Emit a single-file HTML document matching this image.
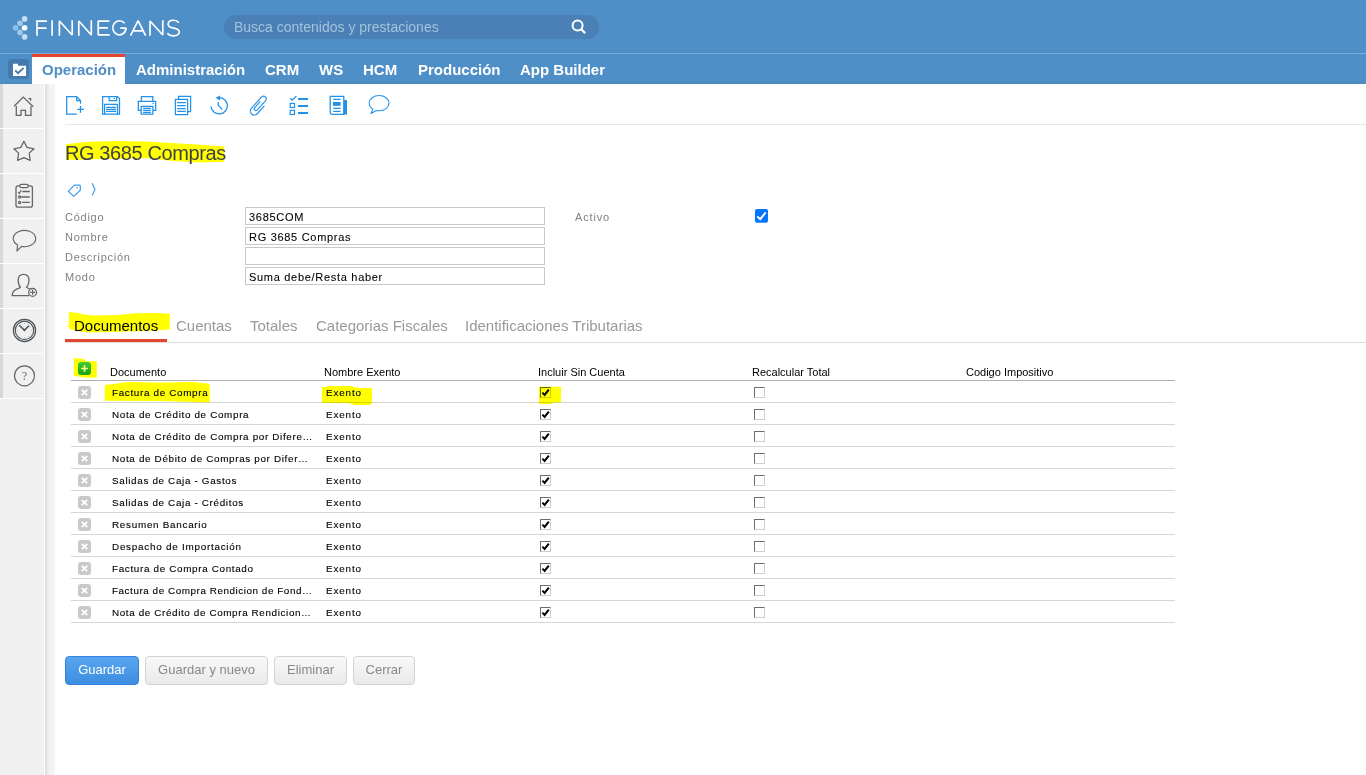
<!DOCTYPE html>
<html><head><meta charset="utf-8">
<style>
*{box-sizing:border-box;margin:0;padding:0}
html,body{width:1366px;height:775px;overflow:hidden;background:#fff;font-family:"Liberation Sans",sans-serif;position:relative}
.abs{position:absolute}
#top{left:0;top:0;width:1366px;height:53px;background:#4f8fc8}
#topline{left:0;top:53px;width:1366px;height:1px;background:#7aabd8}
#nav{left:0;top:54px;width:1366px;height:30px;background:#4f8fc8}
#navbot{left:0;top:83px;width:1366px;height:1px;background:#4a88c2}
.navi{position:absolute;top:60px;font-weight:bold;font-size:15px;color:#fff;line-height:20px;white-space:nowrap}
#optab{left:32px;top:54px;width:93px;height:30px;background:#fff;border-top:3px solid #e5452f}
#search{left:224px;top:15px;width:375px;height:24px;border-radius:12px;background:#4a80b5}
#ph{left:234px;top:18px;font-size:14px;color:#a4c2dd;line-height:18px;white-space:nowrap}
#side{left:0;top:84px;width:45px;height:691px;background:#f0f0f0}
#sidestrip{left:0;top:84px;width:3px;height:314px;background:#d8d8d8}
#sideline{left:44px;top:84px;width:1px;height:691px;background:#fff}
#grad{left:45px;top:84px;width:10px;height:691px;background:linear-gradient(to right,#dcdcdc 0,#e6e6e6 20%,#f3f3f3 45%,#f4f4f4 100%)}
.sep{position:absolute;left:0;width:44px;height:1px;background:#fff}
#tbline{left:65px;top:124px;width:1301px;height:1px;background:#e4e6e9}
#title{left:65px;top:141px;font-size:20px;letter-spacing:-0.4px;color:#404040;line-height:24px;white-space:nowrap}
.lbl{position:absolute;left:65px;font-size:11px;letter-spacing:0.75px;color:#808080;line-height:14px;white-space:nowrap}
.inp{position:absolute;left:245px;width:300px;height:18px;border:1px solid #c8c8c8;background:#fff}
.inpt{position:absolute;left:249px;font-size:11px;letter-spacing:0.7px;color:#000;line-height:14px;white-space:nowrap}
.tab{position:absolute;top:317px;font-size:15px;color:#999;line-height:18px;white-space:nowrap}
#tabline{left:65px;top:342px;width:1301px;height:1px;background:#ddd}
#tabred{left:65px;top:339px;width:102px;height:3px;background:#e4462f}
.gh{position:absolute;top:366px;font-size:11px;color:#000;line-height:13px;white-space:nowrap}
#ghline{left:71px;top:380px;width:1104px;height:1px;background:#b0b0b0}
.rl{position:absolute;left:71px;width:1104px;height:1px;background:#d6d6d6}
.del{position:absolute;left:78px;width:13px;height:13px;border-radius:3px;background:#c9c9c9}
.rt{position:absolute;font-size:9.9px;letter-spacing:0.5px;color:#000;line-height:12px;white-space:nowrap;overflow:hidden}
.cb{position:absolute;width:11px;height:11px;background:#fff;border-top:1px solid #6d6d6d;border-left:1px solid #6d6d6d;border-right:1px solid #cfcfcf;border-bottom:1px solid #cfcfcf}
.btn{position:absolute;top:656px;height:29px;border-radius:4px;border:1px solid #d3d3d3;background:linear-gradient(#f9f9f9,#e9e9e9);color:#888;font-size:13px;line-height:26px;text-align:center;white-space:nowrap}
.del svg{display:block}
.inpt{-webkit-text-stroke:0.08px currentColor}
.rt{-webkit-text-stroke:0.12px currentColor}

</style></head><body>
<div id="top" class="abs"></div>
<div id="topline" class="abs"></div>
<div id="nav" class="abs"></div>
<div id="navbot" class="abs"></div>
<div id="search" class="abs"></div>
<div id="ph" class="abs">Busca contenidos y prestaciones</div>
<svg class="abs" style="left:0;top:0" width="620" height="53" viewBox="0 0 620 53">
 <g fill="none" stroke="#fff" stroke-width="1.65" stroke-linejoin="bevel">
  <path d="M37 20.2V35.7M36.1 21.1H46.9M37 28.1H46.5"/>
  <path d="M52.1 20.2V35.7"/>
  <path d="M59.4 35.7V21L72.2 35V20.2"/>
  <path d="M78.8 35.7V21L91.3 35V20.2"/>
  <path d="M109.3 21.1H98.2V34.8H109.7M98.2 27.9H108.1"/>
  <path d="M124.6 23.3A6.65 7.05 0 1 0 126 29V28.1H120.3"/>
  <path d="M130.5 35.7L138.1 20.6L145.6 35.7M132.8 30.9H143.3"/>
  <path d="M150 35.7V21L162.8 35V20.2"/>
  <path d="M178.9 22.6C177.5 21 175.6 20.2 173.5 20.2C170.2 20.2 168.1 21.9 168.1 24.2C168.1 29.8 179.2 26.6 179.2 31.8C179.2 34.2 177 35.8 173.5 35.8C170.8 35.8 168.6 34.8 167.3 33.2"/>
 </g>
 <circle cx="24.6" cy="18.9" r="2.8" fill="#c5ddf2"/>
 <circle cx="20" cy="23.3" r="2.8" fill="#9cc9ec"/>
 <circle cx="15.6" cy="27.8" r="2.8" fill="#8cc0e8"/>
 <circle cx="24.6" cy="27.8" r="2.8" fill="#fff"/>
 <circle cx="20" cy="32.4" r="2.8" fill="#9cc9ec"/>
 <circle cx="24.6" cy="36.9" r="2.8" fill="#c5ddf2"/>
 <circle cx="577.6" cy="25.6" r="5" fill="none" stroke="#fff" stroke-width="2"/>
 <path d="M581.2 29.2L585.2 33.2" stroke="#fff" stroke-width="2.2"/>
</svg>
<div id="optab" class="abs"></div>
<svg class="abs" style="left:0;top:54px" width="32" height="30" viewBox="0 54 32 30">
 <rect x="8" y="59" width="21" height="20" rx="3.5" fill="#4679ae"/>
 <path d="M13 63.8H18V65.8H26.1V76.1H13Z" fill="#fff"/>
 <path d="M15.2 70.4L18 73.2L23.6 67.8" fill="none" stroke="#4679ae" stroke-width="1.8"/>
</svg>
<div class="navi" style="left:42px;color:#4f8fc8">Operación</div>
<div class="navi" style="left:136px">Administración</div>
<div class="navi" style="left:265px">CRM</div>
<div class="navi" style="left:319px">WS</div>
<div class="navi" style="left:363px">HCM</div>
<div class="navi" style="left:418px">Producción</div>
<div class="navi" style="left:520px">App Builder</div>

<div id="side" class="abs"></div>
<div id="sidestrip" class="abs"></div>
<div id="sideline" class="abs"></div>
<div id="grad" class="abs"></div>
<div class="sep" style="top:128px"></div>
<div class="sep" style="top:173px"></div>
<div class="sep" style="top:218px"></div>
<div class="sep" style="top:263px"></div>
<div class="sep" style="top:308px"></div>
<div class="sep" style="top:353px"></div>
<div class="sep" style="top:398px"></div>
<svg class="abs" style="left:0;top:84px" width="45" height="320" viewBox="0 84 45 320">
 <g fill="none" stroke="#666" stroke-width="1.3">
  <path d="M14 106.3L23.3 97.1L33.2 106.8"/>
  <path d="M28.4 98.6H30.6V100.8"/>
  <path d="M16.3 106V115.4H21V110.3H25.5V115.4H31V106.2"/>
  <path d="M23.9 141.2L27 147.4L34 148.8L29.2 153.1L30.2 160.4L23.9 157.6L17.6 160.4L18.6 153.1L13.8 148.8L20.8 147.4Z" stroke-linejoin="round" stroke-width="1.25"/>
  <rect x="16" y="185.8" width="16.4" height="21.4" rx="2"/>
  <rect x="19.8" y="184.3" width="8.4" height="3.4" rx="1.5" fill="#f0f0f0"/>
  <path d="M18.2 192.2L19.3 193.2L21.3 190.3"/>
  <path d="M22.3 191.5H29.8M21.3 197H29.8M22 202.4H29.8"/>
  <circle cx="19.6" cy="197" r="1.1"/>
  <circle cx="19.6" cy="202.4" r="1.1"/>
  <path d="M17.6 245A11.2 8.1 0 1 1 21.5 246.4L16.9 251Z" stroke-linejoin="round" stroke-width="1.15"/>
  <path d="M20.6 287.3C18.5 285 18.1 282.5 18.2 280C18.3 276.3 20.4 274.3 23.6 274.3C26.8 274.3 28.9 276.3 29 280C29.1 282.5 28.6 285 26.6 287.3C27.4 288 28.6 288.6 30 289M20.6 287.3C19.8 288.1 18.3 288.5 16.6 289.2C13.6 290.5 12.3 292.6 12.2 295.6H29"/>
  <circle cx="32.6" cy="292.4" r="3.9" fill="#f0f0f0"/>
  <path d="M32.6 290V294.8M30.2 292.4H35" stroke-width="1.2"/>
  <circle cx="24.5" cy="330.4" r="11.1" stroke-width="1.25" stroke="#50555a"/>
  <circle cx="24.5" cy="330.4" r="9.2" stroke-width="1.15" stroke="#50555a"/>
  <path d="M19.2 325.2L24.4 330.1L29 325.7" stroke-width="1.5" stroke="#50555a"/>
  <path d="M22.6 329.4L24.4 331.6L26.3 329.4Z" fill="#50555a" stroke="none"/>
  <circle cx="24.5" cy="375.8" r="10" stroke-width="1.2"/>
 </g>
 <g fill="#777">
  <circle cx="24.5" cy="323.3" r=".45"/><circle cx="24.5" cy="337.5" r=".45"/><circle cx="17.4" cy="330.4" r=".45"/><circle cx="31.6" cy="330.4" r=".45"/>
  <circle cx="20.9" cy="324.2" r=".35"/><circle cx="28.1" cy="324.2" r=".35"/><circle cx="20.9" cy="336.6" r=".35"/><circle cx="28.1" cy="336.6" r=".35"/>
  <circle cx="18.3" cy="334" r=".35"/><circle cx="30.7" cy="334" r=".35"/><circle cx="18.3" cy="326.8" r=".35"/><circle cx="30.7" cy="326.8" r=".35"/>
 </g>
 <text x="24.5" y="380.4" text-anchor="middle" font-family="Liberation Serif" font-size="12.5" fill="#707070">?</text>
</svg>

<svg class="abs" style="left:60px;top:88px" width="340" height="30" viewBox="60 88 340 30">
 <g fill="none" stroke="#2191ea" stroke-width="1.25">
  <path d="M76.8 114.2H66.7V96.6H76.6L80.5 100.5V103.8M76.6 96.6V100.5H80.5"/>
  <path d="M77.2 109.4H83.9M80.5 106V112.8"/>
  <path d="M102.6 96.6H117.5L119.5 98.6V114.2H102.6Z"/>
  <path d="M109.2 96.6V100.6H116.7V96.6"/>
  <path d="M104.6 114.2V104.4H117.5V114.2"/>
  <path d="M106.1 107.4H116M106.1 109.4H116M106.1 111.4H116"/>
  <path d="M141.4 101.2V96.6H152.8V101.2"/>
  <path d="M141.2 110.3H138.3V101.3H155.7V110.3H152.9"/>
  <path d="M141.2 106.3H152.9V114.2H141.2Z"/>
  <path d="M143.1 108.4H150.8M143.1 110.3H150.8M143.1 112.3H150.8"/>
  <path d="M178.6 99.3V96.4H190.6V111.7H187.6"/>
  <path d="M175.4 99.4H187.6V114.5H175.4Z"/>
  <path d="M177.2 102.5H185.8M177.2 105.5H185.8M177.2 108.5H185.8M177.2 111.4H185.8"/>
  <path d="M211 106.5A8.2 8.2 0 1 0 218.4 97.6"/>
  <path d="M218.2 102V105.3L222.2 109.6"/>
  <path d="M264.39 105.89L257.27 113.74A4.0 4.0 0 0 1 251.34 108.37L261.69 96.96A2.675 2.675 0 0 1 265.65 100.55L257.05 110.04A1.65 1.65 0 0 1 254.61 107.82L260.38 101.45" stroke-width="1.15"/>
  <path d="M290.2 98.3L292.1 100.2L296.5 96"/>
  <rect x="290.2" y="103.4" width="4.3" height="4.1"/>
  <rect x="290.2" y="110.4" width="4.3" height="4.1"/>
  <path d="M330.2 96.4H343.8V114.3H332.3A2.1 2.1 0 0 1 330.2 112.2Z"/>
  <path d="M333.2 99.4H340.6M333.2 108.4H340.6M333.2 111.3H340.6"/>
  <path d="M379.1 95.5C384.6 95.5 389 98.9 389 103.1C389 107.4 384.6 110.8 379.1 110.8C378 110.8 377.2 110.7 376.3 110.5L371 113.5L372.8 109.2C370.4 107.8 369.2 105.6 369.2 103.1C369.2 98.9 373.6 95.5 379.1 95.5Z" stroke-linejoin="round" stroke-width="1.05"/>
 </g>
 <g fill="#2191ea">
  <path d="M215.6 97.8L220 95.4V100.4Z"/>
  <circle cx="114.3" cy="98.5" r=".7"/>
  <circle cx="153.3" cy="103.5" r=".7"/>
  <rect x="298" y="98" width="10" height="2"/>
  <rect x="298" y="105" width="10" height="2"/>
  <rect x="298" y="112" width="10" height="2"/>
  <rect x="333" y="102" width="7.6" height="3.8"/>
  <path d="M343.6 100.1H346.4A.6 .6 0 0 1 347 100.7V114.5H343.6Z"/>
 </g>
</svg>
<div id="tbline" class="abs"></div>

<svg class="abs" style="left:60px;top:135px" width="175" height="35" viewBox="60 135 175 35">
 <path d="M66 144.3L76.2 143.1L89.9 141.8L114.8 141L144.6 141.5L172 143.1L200.6 144.7L224.3 146.5L224.3 161.8L201.9 162.6L184.5 161.8L168.3 160.5L147 158L134.7 158.6L94.8 159.3L66 159.9Z" fill="#ff0"/>
</svg>
<div id="title" class="abs">RG 3685 Compras</div>

<svg class="abs" style="left:60px;top:178px" width="45" height="24" viewBox="60 178 45 24">
 <g fill="none" stroke="#3d9df0" stroke-width="1.2" stroke-linejoin="round">
  <path d="M68.3 191.3L74.4 185.2H79.8L80.3 185.7V190.3L73.7 196.4Z"/>
  <path d="M92.2 183.2L95 189.5L92.2 195.5"/>
 </g>
 <circle cx="77.2" cy="187.8" r=".8" fill="#3d9df0"/>
</svg>

<div class="lbl" style="top:210px">Código</div>
<div class="lbl" style="top:230px">Nombre</div>
<div class="lbl" style="top:250px">Descripción</div>
<div class="lbl" style="top:270px">Modo</div>
<div class="inp" style="top:207px"></div>
<div class="inp" style="top:227px"></div>
<div class="inp" style="top:247px"></div>
<div class="inp" style="top:267px"></div>
<div class="inpt" style="top:210px">3685COM</div>
<div class="inpt" style="top:230px">RG 3685 Compras</div>
<div class="inpt" style="top:270px">Suma debe/Resta haber</div>
<div class="lbl" style="left:575px;top:210px;letter-spacing:0.85px">Activo</div>
<svg class="abs" style="left:755px;top:209px" width="13" height="14" viewBox="0 0 13 14">
 <rect x="0" y="0" width="13" height="13.7" rx="2" fill="#0075ff"/>
 <path d="M2.3 7.4L5.2 10.2L10.7 3.4" fill="none" stroke="#fff" stroke-width="2"/>
</svg>

<svg class="abs" style="left:65px;top:308px" width="110" height="30" viewBox="65 308 110 30">
 <path d="M68.8 312L78.9 312.9L82.8 314.2L92.5 315.5L119.8 315.1L134.7 313.3L159.3 313.1L169.8 313.8L169.8 329.6L147.9 330.9L119.8 331.8L88.1 332.4L74 330.5L68.8 328.3Z" fill="#ff0"/>
</svg>
<div class="tab" style="left:74px;color:#000">Documentos</div>
<div class="tab" style="left:176px">Cuentas</div>
<div class="tab" style="left:250px">Totales</div>
<div class="tab" style="left:316px">Categorias Fiscales</div>
<div class="tab" style="left:465px">Identificaciones Tributarias</div>
<div id="tabline" class="abs"></div>
<div id="tabred" class="abs"></div>

<svg class="abs" style="left:70px;top:355px" width="30" height="25" viewBox="70 355 30 25">
 <path d="M73.8 358.1L83.9 359L86.1 361.2L96.8 361.2L96.8 377.7L85.2 377.7L73.8 375.7Z" fill="#ff0"/>
 <defs><linearGradient id="gg" x1="0" y1="0" x2="0" y2="1"><stop offset="0" stop-color="#44cc33"/><stop offset="1" stop-color="#17a317"/></linearGradient></defs>
 <rect x="78" y="362" width="13" height="13" rx="3" fill="url(#gg)"/>
 <path d="M84.5 365.2V371.8M81.2 368.5H87.8" stroke="#ffff88" stroke-width="1.6"/>
</svg>
<div class="gh" style="left:110px">Documento</div>
<div class="gh" style="left:324px">Nombre Exento</div>
<div class="gh" style="left:538px">Incluir Sin Cuenta</div>
<div class="gh" style="left:752px">Recalcular Total</div>
<div class="gh" style="left:966px">Codigo Impositivo</div>
<div id="ghline" class="abs"></div>
<div class="del" style="top:386px"><svg width="13" height="13"><path d="M3.8 3.8L9.2 9.2M9.2 3.8L3.8 9.2" stroke="#fff" stroke-width="1.8"/></svg></div>
<div class="rt" style="left:112px;top:387px;letter-spacing:0.66px">Factura de Compra</div>
<div class="rt" style="left:326px;top:387px;letter-spacing:0.85px">Exento</div>
<div class="cb" style="left:540px;top:387px"><svg width="11" height="11" style="position:absolute;left:-1px;top:-1px"><path d="M2.4 5.6 L4.6 7.9 L8.8 2.6" fill="none" stroke="#000" stroke-width="2"/></svg></div>
<div class="cb" style="left:754px;top:387px"></div>
<div class="rl" style="top:402px"></div>
<div class="del" style="top:408px"><svg width="13" height="13"><path d="M3.8 3.8L9.2 9.2M9.2 3.8L3.8 9.2" stroke="#fff" stroke-width="1.8"/></svg></div>
<div class="rt" style="left:112px;top:409px;letter-spacing:0.66px">Nota de Crédito de Compra</div>
<div class="rt" style="left:326px;top:409px;letter-spacing:0.85px">Exento</div>
<div class="cb" style="left:540px;top:409px"><svg width="11" height="11" style="position:absolute;left:-1px;top:-1px"><path d="M2.4 5.6 L4.6 7.9 L8.8 2.6" fill="none" stroke="#000" stroke-width="2"/></svg></div>
<div class="cb" style="left:754px;top:409px"></div>
<div class="rl" style="top:424px"></div>
<div class="del" style="top:430px"><svg width="13" height="13"><path d="M3.8 3.8L9.2 9.2M9.2 3.8L3.8 9.2" stroke="#fff" stroke-width="1.8"/></svg></div>
<div class="rt" style="left:112px;top:431px;letter-spacing:0.66px">Nota de Crédito de Compra por Difere…</div>
<div class="rt" style="left:326px;top:431px;letter-spacing:0.85px">Exento</div>
<div class="cb" style="left:540px;top:431px"><svg width="11" height="11" style="position:absolute;left:-1px;top:-1px"><path d="M2.4 5.6 L4.6 7.9 L8.8 2.6" fill="none" stroke="#000" stroke-width="2"/></svg></div>
<div class="cb" style="left:754px;top:431px"></div>
<div class="rl" style="top:446px"></div>
<div class="del" style="top:452px"><svg width="13" height="13"><path d="M3.8 3.8L9.2 9.2M9.2 3.8L3.8 9.2" stroke="#fff" stroke-width="1.8"/></svg></div>
<div class="rt" style="left:112px;top:453px;letter-spacing:0.66px">Nota de Débito de Compras por Difer…</div>
<div class="rt" style="left:326px;top:453px;letter-spacing:0.85px">Exento</div>
<div class="cb" style="left:540px;top:453px"><svg width="11" height="11" style="position:absolute;left:-1px;top:-1px"><path d="M2.4 5.6 L4.6 7.9 L8.8 2.6" fill="none" stroke="#000" stroke-width="2"/></svg></div>
<div class="cb" style="left:754px;top:453px"></div>
<div class="rl" style="top:468px"></div>
<div class="del" style="top:474px"><svg width="13" height="13"><path d="M3.8 3.8L9.2 9.2M9.2 3.8L3.8 9.2" stroke="#fff" stroke-width="1.8"/></svg></div>
<div class="rt" style="left:112px;top:475px;letter-spacing:0.66px">Salidas de Caja - Gastos</div>
<div class="rt" style="left:326px;top:475px;letter-spacing:0.85px">Exento</div>
<div class="cb" style="left:540px;top:475px"><svg width="11" height="11" style="position:absolute;left:-1px;top:-1px"><path d="M2.4 5.6 L4.6 7.9 L8.8 2.6" fill="none" stroke="#000" stroke-width="2"/></svg></div>
<div class="cb" style="left:754px;top:475px"></div>
<div class="rl" style="top:490px"></div>
<div class="del" style="top:496px"><svg width="13" height="13"><path d="M3.8 3.8L9.2 9.2M9.2 3.8L3.8 9.2" stroke="#fff" stroke-width="1.8"/></svg></div>
<div class="rt" style="left:112px;top:497px;letter-spacing:0.66px">Salidas de Caja - Créditos</div>
<div class="rt" style="left:326px;top:497px;letter-spacing:0.85px">Exento</div>
<div class="cb" style="left:540px;top:497px"><svg width="11" height="11" style="position:absolute;left:-1px;top:-1px"><path d="M2.4 5.6 L4.6 7.9 L8.8 2.6" fill="none" stroke="#000" stroke-width="2"/></svg></div>
<div class="cb" style="left:754px;top:497px"></div>
<div class="rl" style="top:512px"></div>
<div class="del" style="top:518px"><svg width="13" height="13"><path d="M3.8 3.8L9.2 9.2M9.2 3.8L3.8 9.2" stroke="#fff" stroke-width="1.8"/></svg></div>
<div class="rt" style="left:112px;top:519px;letter-spacing:0.72px">Resumen Bancario</div>
<div class="rt" style="left:326px;top:519px;letter-spacing:0.85px">Exento</div>
<div class="cb" style="left:540px;top:519px"><svg width="11" height="11" style="position:absolute;left:-1px;top:-1px"><path d="M2.4 5.6 L4.6 7.9 L8.8 2.6" fill="none" stroke="#000" stroke-width="2"/></svg></div>
<div class="cb" style="left:754px;top:519px"></div>
<div class="rl" style="top:534px"></div>
<div class="del" style="top:540px"><svg width="13" height="13"><path d="M3.8 3.8L9.2 9.2M9.2 3.8L3.8 9.2" stroke="#fff" stroke-width="1.8"/></svg></div>
<div class="rt" style="left:112px;top:541px;letter-spacing:0.75px">Despacho de Importación</div>
<div class="rt" style="left:326px;top:541px;letter-spacing:0.85px">Exento</div>
<div class="cb" style="left:540px;top:541px"><svg width="11" height="11" style="position:absolute;left:-1px;top:-1px"><path d="M2.4 5.6 L4.6 7.9 L8.8 2.6" fill="none" stroke="#000" stroke-width="2"/></svg></div>
<div class="cb" style="left:754px;top:541px"></div>
<div class="rl" style="top:556px"></div>
<div class="del" style="top:562px"><svg width="13" height="13"><path d="M3.8 3.8L9.2 9.2M9.2 3.8L3.8 9.2" stroke="#fff" stroke-width="1.8"/></svg></div>
<div class="rt" style="left:112px;top:563px;letter-spacing:0.66px">Factura de Compra Contado</div>
<div class="rt" style="left:326px;top:563px;letter-spacing:0.85px">Exento</div>
<div class="cb" style="left:540px;top:563px"><svg width="11" height="11" style="position:absolute;left:-1px;top:-1px"><path d="M2.4 5.6 L4.6 7.9 L8.8 2.6" fill="none" stroke="#000" stroke-width="2"/></svg></div>
<div class="cb" style="left:754px;top:563px"></div>
<div class="rl" style="top:578px"></div>
<div class="del" style="top:584px"><svg width="13" height="13"><path d="M3.8 3.8L9.2 9.2M9.2 3.8L3.8 9.2" stroke="#fff" stroke-width="1.8"/></svg></div>
<div class="rt" style="left:112px;top:585px;letter-spacing:0.55px">Factura de Compra Rendicion de Fond…</div>
<div class="rt" style="left:326px;top:585px;letter-spacing:0.85px">Exento</div>
<div class="cb" style="left:540px;top:585px"><svg width="11" height="11" style="position:absolute;left:-1px;top:-1px"><path d="M2.4 5.6 L4.6 7.9 L8.8 2.6" fill="none" stroke="#000" stroke-width="2"/></svg></div>
<div class="cb" style="left:754px;top:585px"></div>
<div class="rl" style="top:600px"></div>
<div class="del" style="top:606px"><svg width="13" height="13"><path d="M3.8 3.8L9.2 9.2M9.2 3.8L3.8 9.2" stroke="#fff" stroke-width="1.8"/></svg></div>
<div class="rt" style="left:112px;top:607px;letter-spacing:0.62px">Nota de Crédito de Compra Rendicion…</div>
<div class="rt" style="left:326px;top:607px;letter-spacing:0.85px">Exento</div>
<div class="cb" style="left:540px;top:607px"><svg width="11" height="11" style="position:absolute;left:-1px;top:-1px"><path d="M2.4 5.6 L4.6 7.9 L8.8 2.6" fill="none" stroke="#000" stroke-width="2"/></svg></div>
<div class="cb" style="left:754px;top:607px"></div>
<div class="rl" style="top:622px"></div>
<svg class="abs" style="left:100px;top:378px;mix-blend-mode:multiply" width="470" height="30" viewBox="100 378 470 30">
 <path d="M104.8 385L118.8 383.3L126 382L163 382.5L192 382L208 383.5L209.8 385L209.8 402.6L160 401L104.8 400.7Z" fill="#ff0"/>
 <path d="M321.9 387H327V385.9H353V387.2H358V388H372V404H370V404.9H353V403.8H349V402.9H321.9Z" fill="#ff0"/>
 <path d="M539 386.8H561V402.6H552V403.9H539Z" fill="#ff0"/>
</svg>

<div class="btn" style="left:65px;width:74px;border-color:#3580e0;background:linear-gradient(#59a6f0,#3d8de0);color:#fff">Guardar</div>
<div class="btn" style="left:145px;width:123px">Guardar y nuevo</div>
<div class="btn" style="left:274px;width:73px">Eliminar</div>
<div class="btn" style="left:353px;width:62px">Cerrar</div>

</body></html>
